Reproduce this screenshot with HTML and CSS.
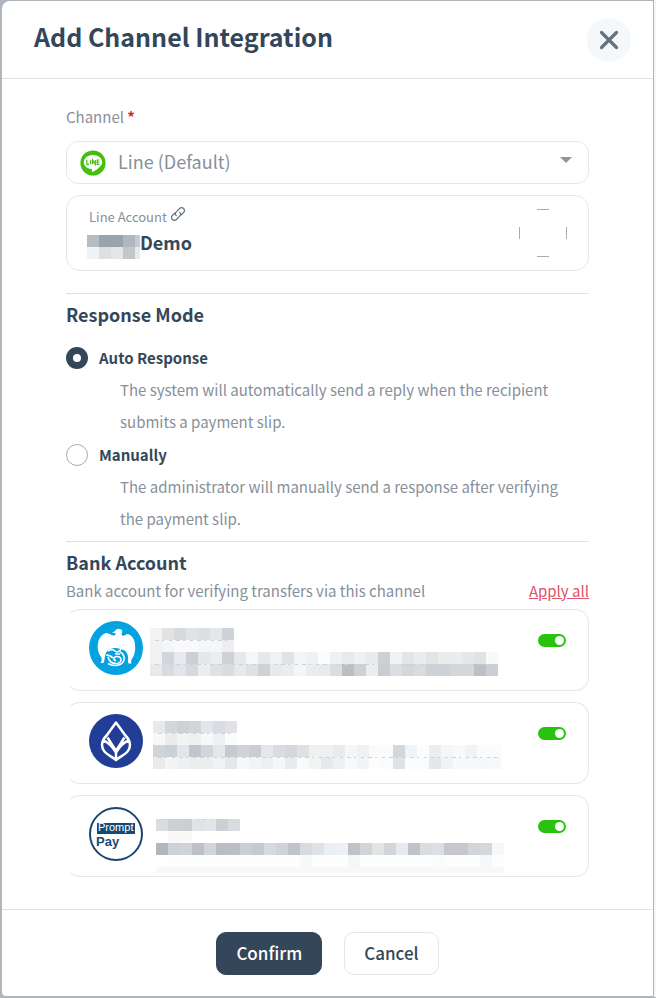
FILE: index.html
```html
<!DOCTYPE html>
<html lang="en">
<head>
    <meta charset="UTF-8">
    <meta name="viewport" content="width=device-width, initial-scale=1.0">
    <title>Add Channel Integration</title>
    <link rel="stylesheet" href="styles.css">
</head>
<body>
    <form class="modal">
        <header class="modal-header">
            <h1>Add Channel Integration</h1>
            <button type="button" class="close-btn" aria-label="Close">
                <svg width="20" height="20" viewBox="0 0 20 20"><path d="M2.500 2.500l15 15M17.500 2.500l-15 15" stroke="#66727d" stroke-width="3.200" stroke-linecap="round"/></svg>
            </button>
        </header>

        <main class="modal-body">
            <label class="field-label" for="channel">Channel <span class="required">*</span></label>
            <div class="select-box">
                <svg width="26" height="26" viewBox="0 0 26 26">
                    <circle cx="13" cy="13" r="12.600" fill="#45bf0e"/>
                    <path d="M13 5C7.800 5 3.800 8.200 3.800 12.200c0 3.500 3.200 6.300 7.400 6.900 1 .2 1 .7.700 2.500 0 .5.300.6.700.4 3.500-2 9.600-5.700 9.600-9.800C22.200 8.200 18.200 5 13 5z" fill="#fff"/>
                    <path d="M6.800 10v4.300h2.400M10.700 10v4.300M12.600 14.300V10l2.700 4.300V10M19.500 10h-2.300v4.300h2.300M17.200 12.100h2" fill="none" stroke="#45bf0e" stroke-width="1.200"/>
                </svg>
                <select id="channel" name="channel">
                    <option>Line (Default)</option>
                </select>
                <svg class="arrow" width="12" height="6" viewBox="0 0 12 6"><path d="M0 0h12L6 6z" fill="#949494"/></svg>
            </div>

            <section class="account-card">
                <div>
                    <p class="account-label">Line Account
                        <svg width="16" height="16" viewBox="0 0 16 16" fill="none" stroke="#66727d" stroke-width="1.200" stroke-linecap="round"><path d="M6.300 9.700C5 8.400 5.200 6.900 6.300 5.800l3.300-3.300c1.200-1.200 2.900-1.200 4 0s1.100 2.800 0 4l-2.700 2.600M9.700 6.300c1.300 1.300 1.100 2.800 0 3.900l-3.300 3.300c-1.200 1.200-2.900 1.200-4 0s-1.100-2.800 0-4L5 7"/></svg>
                    </p>
                    <p class="account-name"><svg class="mosaic" data-width="53" data-rows="b5bcc4 99a3ad 9aa4ae b0b7bf c5cad0|f1f2f3 dedfe1 e4e6e8 c2c7cc e8e9eb"></svg>Demo</p>
                </div>
                <svg class="avatar" width="50" height="50" viewBox="0 0 50 50" stroke="#a9adb1" stroke-width="1"><path d="M19 1.500h12M19 48.500h12M1.500 19v12M48.500 19v12"/></svg>
            </section>

            <section class="section">
                <h2>Response Mode</h2>
                <div class="option">
                    <input type="radio" id="auto" name="mode" checked>
                    <label for="auto">Auto Response</label>
                </div>
                <p class="option-text">The system will automatically send a reply when the recipient submits a payment slip.</p>
                <div class="option">
                    <input type="radio" id="manual" name="mode">
                    <label for="manual">Manually</label>
                </div>
                <p class="option-text">The administrator will manually send a response after verifying the payment slip.</p>
            </section>

            <section class="section bank-section">
                <h2>Bank Account</h2>
                <div class="bank-intro">
                    <p>Bank account for verifying transfers via this channel</p>
                    <a href="#">Apply all</a>
                </div>

                <div class="bank-list">
                    <div class="bank-card">
                        <svg class="logo" width="54" height="54" viewBox="0 0 54 54">
                            <circle cx="27" cy="27" r="27" fill="#05a2e1"/>
                            <path d="M23 12l3-2c1-1.500 3-2.500 4.500-2 2 0 3 1.500 2.700 3-.5 1.800-1.200 2.500 0 3.500 1.500.8 3-.5 5-1.500 4 .5 6.500 4 7.500 8.500 1 6 .5 12-2.500 16-1.200 2-1.500 3-.7 5h-3c-1-2 0-4-.5-7-.5-4-3-6.500-6-7-3-.6-4-1.500-6-1.500-5 0-9 2-10.500 6-1 3-.5 6-2 9h-3c2-3 1.500-5 0-7-3-4-3.500-10-2-15 1.500-4 4-7.500 8-8 3 0 5.500 3 7.500 2.500 1.800-.5 2-2 1-2.500z" fill="#fff"/>
                            <path d="M19 30c3-2 5-2 7 0s5 0 6-2M19 36c1 4 4 6.500 8 6.500 6 0 7-7 1-7-4 0-4 4-1 4M17 34c3 0 5 1 7 3M31 31c6 3 5 10 0 12.500-4 1.500-8 1.500-12-1M26 33h5" fill="none" stroke="#fff" stroke-width="1.600"/>
                        </svg>
                        <svg class="mosaic" data-width="348" data-rows="f1f3f4 e2e3e5 d7dadd e0e4e7 dcdfe3 e3e7ea cfd2d6|f1f2f2 f5f6f7 f8f9f8 f8f9f8 f5f6f7 f4f6f8 eceef0|f0f1f3 d2d6dc e6e9ed cbd0d4 e4e8ec ecedef cfd1d5 e6e8ec f5f6f8 e4e8ea eff1f3 dfe3e8 f3f5f7 eff1f2 fbfcfd edf1f4 e5eaee eff0f1 e9eaec cdd0d5 f1f2f4 e4e5e7 ebecee e3e4e6 ebecec ebecec e6e7e9 e1e2e4 f8f9f9|e8e9eb dadbdf e2e6ea d6dade ecedee e0e1e2 dbdce0 e7e8ea dde2e6 ced2d6 e8e9ea e9edf0 f4f5f6 ebecee e9eaec dadee1 bbbfc4 cdd0d4 ecedef c9cdd2 dadee2 d4d6d9 d9dcdf cdd2d6 cdd2d6 d3d7da d3d7da bdc0c4 cbced2" data-marks="12 36"></svg>
                        <input type="checkbox" class="toggle" aria-label="Bank account 1" checked>
                    </div>

                    <div class="bank-card">
                        <svg class="logo" width="54" height="54" viewBox="0 0 54 54">
                            <circle cx="27" cy="27" r="27" fill="#213d95"/>
                            <path d="M27 8.500L18 21c-3 3-5 6-5 10 0 8 8 10 14 15 6-5 14-7 14-15 0-4-2-7-5-10zM27 45v-7M14.500 26.500c5 2 9 6 12.500 12 3.500-6 7.500-10 12.500-12M18.500 23.500L27 37l8.500-13.500" fill="none" stroke="#fff" stroke-width="2.500" stroke-linejoin="round"/>
                        </svg>
                        <svg class="mosaic shifted" data-width="348" data-rows="e8e9eb d3d6da cdd1d4 d2d4d8 e4e5ea d9dce2 e1e2e5|f7f8fa ebecee f1f2f3 eff0f2 f7f8fa eff0f3 fafbfc|cfd4d8 cbd2d7 e2e6ea c2c6cc d2d5d9 e5e6e9 c5cad0 cfd2d6 caced3 e5e8eb d8dce0 d4d8dc e0e1e2 eef1f2 eff0f1 eaebec f3f7fa f0f1f3 fafbfd fafbfd d3d7da eff4f9 fbfcfd ecedee f5f6f7 f6fafb f2f3f5 fafbfc fafbfc|e9eaeb f3f4f6 edf1f4 ecedee ecedef f0f1f4 e6e7ea f6f7f9 f2f3f4 eeeff0 f5f6f8 e8eaec fafafa f2f4f4 e6e9ea eff0f1 f7fafb f3f4f5 fdfdfe fafbfc dfe2e4 fafbfd fafbfd e4e8ea f0f2f4 f7f9fa f7f8fa f4f7fb f6f8fa" data-marks="12 36"></svg>
                        <input type="checkbox" class="toggle" aria-label="Bank account 2" checked>
                    </div>

                    <div class="bank-card">
                        <svg class="logo" width="54" height="54" viewBox="0 0 54 54">
                            <circle cx="27" cy="27" r="26" fill="#fff" stroke="#1d466f" stroke-width="2"/>
                            <rect x="8" y="16" width="38" height="11" fill="#144b76"/>
                            <text x="9" y="24" class="logo-prompt">Prompt</text>
                            <text x="7" y="39" class="logo-pay">Pay</text>
                        </svg>
                        <svg class="mosaic shifted-more" data-width="348" data-rows="d9dce0 cdcfd3 cbced3 e0e3e6 e2e6ea cbd0d4 d8dce0|ffffff f9f9fa f9f9fa|b2b6bf cdd2d8 d0d4d9 bdc1c7 d2d5d8 b9bdc4 bbbfc5 cacfd5 c5cad0 d5dade cfd3d9 bfc3ca d8dbde dfe2e6 e9eff2 edf1f5 bfc2c7 d1d5d8 e1e5e5 d3d6d9 e6eaf0 bfc2c8 d9dddd dce0e4 c5c8ce c6c8cc d2d6da d3d8db f6f7f8|ffffff fdfdfd fdfdfd fdfdfd fdfdfd fdfdfd fdfdfd fdfdfd fdfdfd fdfdfd fdfdfd fdfdfd f8f9f9 fdfdfd fdfdfd fdfdfd f5f6f6 fdfdfd fdfdfd fdfdfd fdfdfd fdfdfd fdfdfd fafbfd fdfdfd fdfdfd fdfdfd f6f8f7 fdfdfd" data-marks="0" data-base="f8f8f8"></svg>
                        <input type="checkbox" class="toggle" aria-label="Bank account 3" checked>
                    </div>
                </div>
            </section>
        </main>

        <footer class="modal-footer">
            <button type="submit" class="btn btn-confirm">Confirm</button>
            <button type="button" class="btn btn-cancel">Cancel</button>
        </footer>
    </form>
    <script src="script.js"></script>
</body>
</html>
```

FILE: styles.css
```css
* {
    box-sizing: border-box;
}

html {
    background: #aeb5bd;
}

body {
    margin: 0;
    padding: 1px 1px 1px 2px;
    border-right: 2px solid #f4f7f9;
    background: #aeb5bd;
    color: #34475a;
    font-family: "Noto Sans CJK SC", "Noto Sans", sans-serif;
    font-size: 15px;
}

h1, h2, p {
    margin: 0;
}

button, select {
    font-family: inherit;
}

.modal {
    background: #fff;
    border-radius: 8px 0 0 4px;
}

.modal-header {
    display: flex;
    justify-content: space-between;
    align-items: center;
    height: 78px;
    padding: 0 22px 0 32px;
    border-bottom: 1px solid #dfe1e4;
}

.modal-header h1 {
    font-size: 25px;
    line-height: 40px;
    font-weight: 700;
    padding-bottom: 8px;
}

.close-btn {
    display: flex;
    align-items: center;
    justify-content: center;
    width: 44px;
    height: 44px;
    padding: 0;
    border: none;
    border-radius: 50%;
    background: #f4f8fa;
    cursor: pointer;
}

.modal-body {
    padding: 26px 64px 32px;
}

.field-label {
    display: block;
    line-height: 24px;
    color: #87909a;
}

.required {
    color: #e02020;
    font-weight: 700;
}

.select-box {
    display: flex;
    align-items: center;
    height: 43px;
    margin-top: 12px;
    padding: 0 16px 0 13px;
    border: 1px solid #e6e7e9;
    border-radius: 12px;
}

.select-box select {
    flex: 1;
    appearance: none;
    height: 40px;
    padding: 0 12px 4px;
    border: none;
    background: transparent;
    color: #87909a;
    font-size: 18px;
}

.arrow {
    margin-bottom: 5px;
}

.account-card {
    display: flex;
    justify-content: space-between;
    align-items: center;
    height: 76px;
    margin-top: 11px;
    padding: 0 20px;
    border: 1px solid #e6e7e9;
    border-radius: 14px;
}

.account-label {
    display: flex;
    align-items: center;
    gap: 3px;
    padding-left: 2px;
    font-size: 13px;
    line-height: 20px;
    color: #87909a;
}

.account-label svg {
    margin-bottom: 6px;
}

.account-name {
    display: flex;
    align-items: center;
    height: 32px;
    padding-bottom: 4px;
    font-size: 18px;
    line-height: 28px;
    font-weight: 700;
}

.account-name .mosaic {
    margin-top: 10px;
}

.section {
    margin-top: 22px;
    padding-top: 6px;
    border-top: 1px solid #dfe1e4;
}

.bank-section {
    margin-top: 6px;
}

.section h2 {
    font-size: 18px;
    line-height: 28px;
    font-weight: 700;
}

.option {
    display: flex;
    align-items: center;
    gap: 11px;
    height: 33px;
}

.section h2 + .option {
    margin-top: 13px;
}

.option input {
    appearance: none;
    width: 22px;
    height: 22px;
    margin: 0;
    border: 1px solid #a5adb5;
    border-radius: 50%;
}

.option input:checked {
    border: 7px solid #34475a;
}

.option label {
    line-height: 22px;
    font-weight: 700;
}

.option-text {
    padding: 0 20px 0 54px;
    line-height: 32px;
    color: #87909a;
}

.bank-intro {
    display: flex;
    justify-content: space-between;
    line-height: 24px;
    margin-top: 3px;
    color: #87909a;
}

.bank-intro a {
    color: #e0536a;
}

.bank-list {
    display: flex;
    flex-direction: column;
    gap: 11px;
    margin-top: 6px;
}

.bank-card {
    display: flex;
    align-items: flex-start;
    height: 82px;
    padding: 11px 22px;
    border: 1px solid #e6e7e9;
    border-left-color: transparent;
    border-radius: 14px;
}

.bank-card .mosaic {
    margin: 7px 0 0 7px;
}

.bank-card .shifted {
    margin-left: 10px;
}

.bank-card .shifted-more {
    margin: 12px 0 0 13px;
}

.logo-prompt {
    font: 11px "Liberation Sans", sans-serif;
    fill: #fff;
}

.logo-pay {
    font: bold 13px "Liberation Sans", sans-serif;
    fill: #144b76;
}

.toggle {
    appearance: none;
    display: flex;
    justify-content: flex-end;
    width: 28px;
    height: 13px;
    margin: 13px 0 0 auto;
    padding: 2px;
    border-radius: 7px;
    background: #29c20f;
    cursor: pointer;
}

.toggle::before {
    content: "";
    width: 9px;
    height: 9px;
    border-radius: 50%;
    background: #fff;
}

.toggle:not(:checked) {
    justify-content: flex-start;
    background: #c3c8cd;
}

.modal-footer {
    display: flex;
    justify-content: center;
    gap: 22px;
    padding: 22px 0 21px;
    border-top: 1px solid #dfe1e4;
}

.btn {
    height: 43px;
    padding: 0 19px 2px;
    border: 1px solid #e2e5e9;
    border-radius: 10px;
    background: #fff;
    color: #34475a;
    font-size: 17px;
    font-weight: 500;
    cursor: pointer;
}

.btn-confirm {
    border-color: #34475a;
    background: #34475a;
    color: #fff;
}
```

FILE: script.js
```js
const CELL = 12;
const NS = 'http://www.w3.org/2000/svg';

function addRect(svg, x, y, width, height, fill) {
    const rect = document.createElementNS(NS, 'rect');
    rect.setAttribute('x', x);
    rect.setAttribute('y', y);
    rect.setAttribute('width', width);
    rect.setAttribute('height', height);
    rect.setAttribute('fill', fill);
    svg.appendChild(rect);
}

// Hidden account details are drawn as a grid of colored cells
document.querySelectorAll('.mosaic').forEach(svg => {
    const rows = svg.dataset.rows.split('|').map(row => row.split(' '));
    const base = svg.dataset.base;
    const height = rows.length * CELL;
    svg.setAttribute('width', svg.dataset.width);
    svg.setAttribute('height', base ? height + 6 : height);
    rows.forEach((row, r) => {
        row.forEach((color, c) => addRect(svg, c * CELL, r * CELL, CELL, CELL, '#' + color));
    });

    if (base) {
        addRect(svg, 0, height, svg.dataset.width, 6, '#' + base);
    }

    // thin broken lines between the rows
    (svg.dataset.marks || '').split(' ').filter(Boolean).forEach(mark => {
        const y = Number(mark);
        const end = rows[Math.floor(y / CELL)].length * CELL;
        for (let x = 5; x < end - 4; x += 7) {
            addRect(svg, x, y, x % 3 + 2, 1, '#cfd2d5');
        }
    });
});
```
